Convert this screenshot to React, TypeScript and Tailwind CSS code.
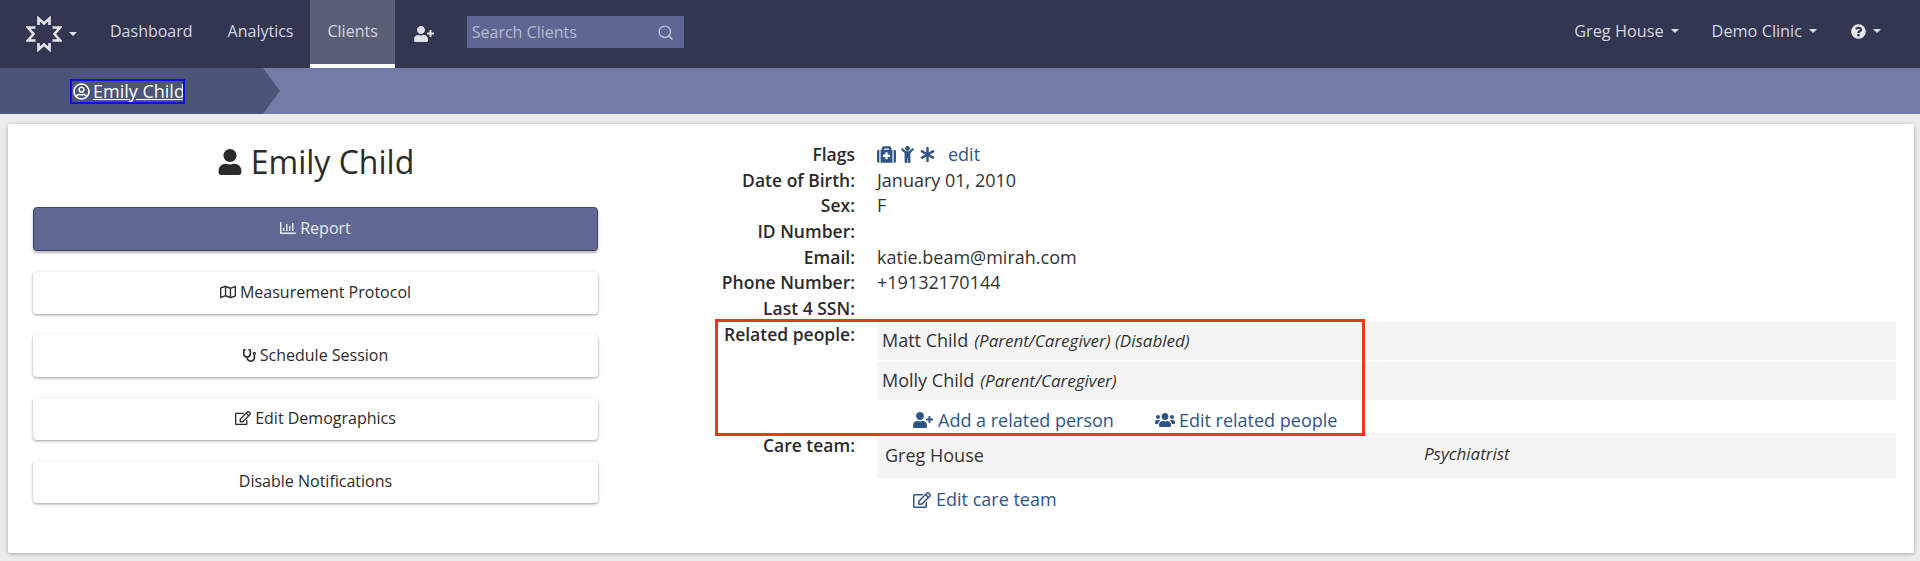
import { FaAsterisk, FaChild, FaMedkit, FaQuestionCircle, FaRegChartBar, FaRegEdit, FaRegMap, FaRegUserCircle, FaStethoscope, FaUser, FaUserPlus, FaUsers } from 'react-icons/fa'
import { Search } from 'lucide-react'
import type { ReactNode } from 'react'

function Caret() {
  return <span className="inline-block border-x-[4px] border-t-[4px] border-x-transparent border-t-[#dfe1ea]" />
}

function Logo() {
  return (
    <svg width="36" height="36" viewBox="0 0 36 36" fill="none" stroke="#e4e5ea" strokeWidth="2.6" strokeLinejoin="miter">
      <path d="M12.5 9V2.5L18 7.5L23.5 2.5V9" />
      <path d="M12.5 27V33.5L18 28.5L23.5 33.5V27" />
      <path d="M9.5 11.5H2L7.5 18L2 24.5H9.5" />
      <path d="M26.5 11.5H34L28.5 18L34 24.5H26.5" />
    </svg>
  )
}

function NavItem({ label, active }: { label: string; active?: boolean }) {
  return (
    <a className={`flex h-[68px] items-center px-[17px] pb-[6px] text-[16px] text-[#d4d7e3] ${active ? 'border-b-[4px] border-white bg-[#5a5e74] !pb-[2px]' : ''}`}>
      {label}
    </a>
  )
}

function ActionButton({ children, primary }: { children: ReactNode; primary?: boolean }) {
  return (
    <button
      className={`flex w-full items-center justify-center gap-[4px] rounded-[4px] pb-[2px] text-[16px] ${
        primary
          ? 'h-[44px] border border-[#3f4666] bg-[#5e6893] text-[#e6e8f0] shadow-[0_2px_3px_rgba(0,0,0,0.3)]'
          : 'h-[42px] bg-white text-[#2b2b2b] shadow-[0_1px_3px_rgba(0,0,0,0.4)]'
      }`}
    >
      {children}
    </button>
  )
}

function InfoRow({ label, children }: { label: string; children?: ReactNode }) {
  return (
    <div className="flex h-[25.7px] items-center text-[18px] leading-[25.7px]">
      <div className="w-[257px] text-right text-[17.5px] font-semibold text-[#2b2b2b]">{label}</div>
      <div className="ml-[22px] text-[#333]">{children}</div>
    </div>
  )
}

export default function App() {
  return (
    <div className="relative h-[561px] w-[1920px] overflow-hidden bg-[#ececec] font-['Open_Sans',sans-serif]">
      <nav className="flex h-[68px] items-center bg-[#323650]">
        <div className="ml-[26px] flex items-center gap-[7px]">
          <Logo />
          <Caret />
        </div>
        <div className="ml-[16px] flex items-center">
          <NavItem label="Dashboard" />
          <div className="w-[1px]" />
          <NavItem label="Analytics" />
          <NavItem label="Clients" active />
        </div>
        <FaUserPlus className="ml-[19px] text-[20px] text-[#e2e3ea]" />
        <div className="mb-[4px] ml-[33px] flex h-[32px] w-[217px] items-center justify-between bg-[#5e6793] pl-[5px] pr-[10px] text-[16px] text-[#b6bbd4]">
          <span>Search Clients</span>
          <Search size={17} className="text-[#c0c4da]" />
        </div>
        <div className="ml-auto flex items-center pb-[6px] pr-[39px] text-[16.3px] text-[#d4d7e3]">
          <span className="flex items-center gap-[7px]">Greg House <Caret /></span>
          <span className="ml-[33px] flex items-center gap-[7px]">Demo Clinic <Caret /></span>
          <span className="ml-[34px] flex items-center gap-[7px]"><FaQuestionCircle className="text-[15px] text-[#e8e9ef]" /> <Caret /></span>
        </div>
      </nav>

      <div className="flex h-[46px] bg-[#737ba6]">
        <div className="flex w-[263px] items-center bg-[#4c5578] pl-[70px]">
          <a className="flex h-[25px] w-[115px] items-center gap-[3px] overflow-hidden border-[2px] border-[#1010e0] px-[1px] text-[18px] font-medium text-white underline">
            <FaRegUserCircle className="shrink-0 text-[17px]" />
            <span className="whitespace-nowrap">Emily Child</span>
          </a>
        </div>
        <div className="h-0 w-0 border-y-[23px] border-l-[17px] border-y-transparent border-l-[#4c5578]" />
      </div>

      <main className="ml-[8px] mr-[6px] mt-[10px] flex h-[429px] rounded-[2px] bg-white shadow-[0_1px_4px_rgba(0,0,0,0.3)]">
        <section className="ml-[25px] w-[565px]">
          <h1 className="mt-[16px] flex items-center justify-center gap-[8px] text-[32px] leading-[44px] text-[#2b2b2b]">
            <FaUser className="text-[26px]" />
            Emily Child
          </h1>
          <div className="mt-[23px] flex flex-col gap-[21px]">
            <ActionButton primary><FaRegChartBar /> Report</ActionButton>
            <ActionButton><FaRegMap /> Measurement Protocol</ActionButton>
            <ActionButton><FaStethoscope className="text-[13px]" /> Schedule Session</ActionButton>
            <ActionButton><FaRegEdit /> Edit Demographics</ActionButton>
            <ActionButton>Disable Notifications</ActionButton>
          </div>
        </section>

        <section className="flex-1 pr-[18px] pt-[18px]">
          <InfoRow label="Flags">
            <span className="flex items-center text-[#2f5587]">
              <FaMedkit className="text-[19px]" />
              <FaChild className="ml-[3px] text-[17px]" />
              <FaAsterisk className="ml-[4px] text-[15px]" />
              <a className="ml-[13px]">edit</a>
            </span>
          </InfoRow>
          <InfoRow label="Date of Birth:">January 01, 2010</InfoRow>
          <InfoRow label="Sex:">F</InfoRow>
          <InfoRow label="ID Number:" />
          <InfoRow label="Email:">katie.beam@mirah.com</InfoRow>
          <InfoRow label="Phone Number:">+19132170144</InfoRow>
          <InfoRow label="Last 4 SSN:" />

          <div className="flex text-[18px]">
            <div className="w-[257px] text-right text-[17.5px] font-semibold leading-[25px] text-[#2b2b2b]">Related people:</div>
            <div className="ml-[22px] flex-1">
              <div className="flex h-[38px] items-center bg-[#f5f5f5] pl-[5px] text-[#333]">
                Matt Child <i className="ml-[6px] text-[17px]">(Parent/Caregiver) (Disabled)</i>
              </div>
              <div className="mt-[2px] flex h-[38px] items-center bg-[#f5f5f5] pl-[5px] text-[#333]">
                Molly Child <i className="ml-[6px] text-[17px]">(Parent/Caregiver)</i>
              </div>
              <div className="flex h-[33px] items-center pl-[36px] pt-[8px] text-[#2f5587]">
                <FaUserPlus className="text-[20px]" />
                <a className="ml-[5px]">Add a related person</a>
                <FaUsers className="ml-[41px] text-[20px]" />
                <a className="ml-[4px]">Edit related people</a>
              </div>
            </div>
          </div>

          <div className="flex text-[18px]">
            <div className="w-[257px] text-right text-[17.5px] font-semibold leading-[25px] text-[#2b2b2b]">Care team:</div>
            <div className="ml-[22px] flex-1">
              <div className="flex h-[45px] items-center bg-[#f5f5f5] pl-[8px] text-[#333]">
                <span className="w-[539px]">Greg House</span>
                <i className="mb-[3px] text-[17px]">Psychiatrist</i>
              </div>
              <div className="flex h-[44px] items-center pl-[36px] text-[#2f5587]">
                <FaRegEdit className="text-[18px]" />
                <a className="ml-[5px]">Edit care team</a>
              </div>
            </div>
          </div>
        </section>
      </main>

      {/* annotation drawn over the page */}
      <div className="absolute left-[715px] top-[319px] h-[117px] w-[650px] border-[3px] border-[#e8391a]" />
    </div>
  )
}
